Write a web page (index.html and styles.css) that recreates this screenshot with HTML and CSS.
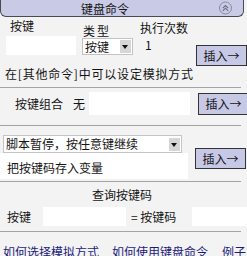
FILE: index.html
```html
<!DOCTYPE html>
<html lang="zh-CN">
<head>
  <meta charset="UTF-8">
  <title>键盘命令</title>
  <link rel="stylesheet" href="styles.css">
</head>
<body>
  <div id="panel">
    <div class="head">
      <span class="title">键盘命令</span>
      <svg class="fold" width="15" height="14" viewBox="0 0 15 14">
        <circle cx="7.5" cy="7" r="6" fill="none" stroke="#8a8a9c" stroke-width="1"/>
        <path d="M4.8 7.2 L7.5 4.6 L10.2 7.2 M4.8 9.8 L7.5 7.2 L10.2 9.8" fill="none" stroke="#6a6a7c" stroke-width="1.1"/>
      </svg>
    </div>

    <div class="keyrow">
      <div class="col col-key">
        <div class="lbl">按键</div>
        <div class="field"></div>
      </div>
      <div class="col col-type">
        <div class="lbl">类型</div>
        <div class="sel sel-type"><span>按键</span><i class="arrow"></i></div>
      </div>
      <div class="col col-times">
        <div class="lbl">执行次数</div>
        <div class="num">1</div>
      </div>
      <button class="ins ins-key">插入→</button>
    </div>
    <p class="note">在[其他命令]中可以设定模拟方式</p>

    <hr>

    <div class="combo">
      <span class="combo-lbl">按键组合</span>
      <span class="combo-val">无</span>
      <div class="field combo-field"></div>
      <button class="ins">插入→</button>
    </div>

    <hr>

    <div class="pause">
      <div class="pause-left">
        <div class="sel sel-pause"><span>脚本暂停，按任意键继续</span><i class="arrow"></i></div>
        <div class="pause-var">把按键码存入变量</div>
      </div>
      <button class="ins ins-pause">插入→</button>
    </div>

    <hr>

    <div class="query">
      <div class="query-title">查询按键码</div>
      <div class="query-row">
        <span class="q-lbl">按键</span>
        <div class="field q-key"></div>
        <span class="q-eq">= 按键码</span>
        <div class="field q-code"></div>
      </div>
    </div>

    <hr>

    <div class="links">
      <a href="#">如何选择模拟方式</a>
      <a href="#">如何使用键盘命令</a>
      <a href="#">例子</a>
    </div>
  </div>
</body>
</html>
```

FILE: styles.css
```css
*{box-sizing:border-box;margin:0}
body{
  background:#f3f3f3;color:#151515;
  font-family:"Noto Sans CJK SC","Noto Sans",sans-serif;font-size:12px;line-height:14px;
}
#panel{width:247px;overflow:hidden;white-space:nowrap}
#panel span,#panel .field,#panel .ins,#panel a{flex-shrink:0}

.head{
  display:flex;align-items:center;height:17px;width:244px;
  background:#c9cae6;border:1px solid #4a4a55;border-top:0;border-radius:0 0 6px 6px;
}
.head .title{margin-left:80px;line-height:15px}
.head .fold{margin-left:auto;margin-right:10px}

.keyrow{display:flex;align-items:flex-start}
.col{flex-shrink:0}
.col-key{margin-left:6px;width:70px}
.col-key .lbl{margin:2px 0 0 4px}
.col-key .field{margin-top:3px;height:19px}
.col-type{margin-left:6px;width:51px}
.col-type .lbl{margin:7px 0 0 1px;letter-spacing:2px}
.col-times{margin-left:7px;width:56px}
.col-times .lbl{margin-top:4px}
.col-times .num{margin:3px 0 0 5px}
.ins-key{margin-top:28px}

.field{background:#fff}

.sel{display:flex;align-items:center;background:#fff;border:1px solid #c4c4c4;height:17px}
.sel span{flex:1;padding-left:2px}
.sel .arrow{
  width:11px;height:13px;margin-right:1px;background:#d6d6d6;position:relative;flex-shrink:0;
}
.sel .arrow::after{
  content:"";position:absolute;left:2px;top:5px;
  border-left:3.5px solid transparent;border-right:3.5px solid transparent;border-top:4px solid #111;
}

.ins{
  width:51px;height:21px;padding:0;
  background:#c6c8e5;border:1px solid #333;color:#151515;
  font:inherit;line-height:18px;text-align:center;
}

.note{margin:1px 0 0 5px;letter-spacing:.8px}

hr{border:0;border-top:1px solid #a4a4a4;width:241px;height:0}
.note + hr{margin-top:6px}

.combo{display:flex;align-items:center;margin:4px 0 10px;height:23px}
.combo-lbl{margin-left:15px}
.combo-val{margin-left:10px}
.combo-field{margin-left:4px;width:101px;height:23px}
.combo .ins{margin-left:8px;height:22px}

.pause{display:flex;align-items:flex-start;margin-top:9px}
.pause-left{width:188px;flex-shrink:0}
.sel-pause{margin-left:3px;width:179px;height:18px}
.pause-var{background:#fff;height:26px;padding:8px 0 0 7px}
.ins-pause{margin:13px 0 0 7px}
.pause + hr{margin-top:2px}

.query-title{text-align:center;padding:6px 0 0;margin-right:3px}
.query-row{display:flex;align-items:center;margin-top:5px;height:19px}
.q-lbl{margin-left:7px}
.q-key{margin-left:12px;width:83px;height:19px}
.q-eq{margin-left:5px}
.q-code{margin-left:16px;width:60px;height:19px}
.query + hr{margin-top:5px}

.links{display:flex;margin-top:13px}
.links a{color:#1b1b7a;text-decoration:underline}
.links a:first-child{margin-left:3px}
.links a:nth-child(2){margin-left:13px}
.links a:nth-child(3){margin-left:14px}
```
